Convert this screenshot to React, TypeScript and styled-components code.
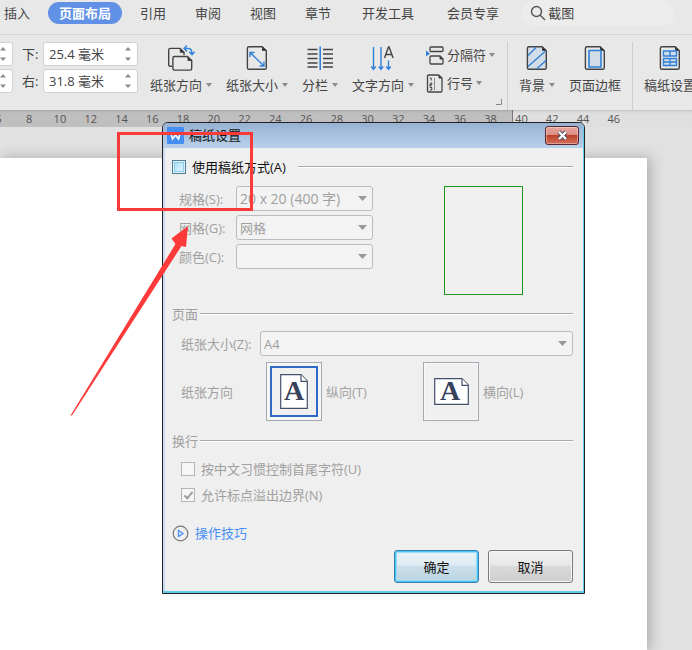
import React from "react";
import styled, { createGlobalStyle } from "styled-components";

const GlobalStyle = createGlobalStyle`
  *, *::before, *::after { box-sizing: border-box; }
  body { margin: 0; overflow: hidden; }
  body, button, input, select {
    font-family: "Open Sans", "Noto Sans CJK SC", sans-serif;
    font-size: 13px;
    line-height: 18px;
  }
  button { border: 0; padding: 0; background: none; color: inherit; }
`;

const Screen = styled.div`
  position: relative;
  min-height: 100vh;
  display: flex;
  flex-direction: column;
  overflow: hidden;
  background: #e1e1e1;
  color: #444;
`;

/* Tab strip */
const TabBar = styled.header`
  display: flex;
  align-items: center;
  height: 35px;
  padding-bottom: 8px;
  background: #e8e8e8;
  border-bottom: 1px solid #d6d6d6;
`;

const Tabs = styled.nav`
  display: flex;
  flex: none;
  gap: 1px;
  margin-left: -10px;
`;

const Tab = styled.button<{ $wide?: boolean; $active?: boolean }>`
  height: 22px;
  white-space: nowrap;
  padding: 0 ${(p) => (p.$active ? 11 : p.$wide ? 16 : 14)}px;
  margin: 0 ${(p) => (p.$active ? 3 : 0)}px;
  border-radius: 11px;
  background: ${(p) => (p.$active ? "#6191e6" : "transparent")};
  color: ${(p) => (p.$active ? "#fff" : "#444")};
  font-weight: ${(p) => (p.$active ? 600 : 400)};
`;

const Search = styled.label`
  display: flex;
  align-items: center;
  gap: 2px;
  flex: 0 0 153px;
  height: 26px;
  margin-left: 7px;
  padding-left: 8px;
  border-radius: 13px;
  background: #ececec;
`;

const SearchInput = styled.input`
  width: 100px;
  min-width: 0;
  padding: 0;
  border: 0;
  outline: 0;
  background: transparent;
  color: #444;
`;

/* Ribbon */
const Ribbon = styled.div`
  display: flex;
  align-items: flex-start;
  height: 75px;
  flex: none;
  padding-top: 7px;
  background: #e8e8e8;
  white-space: nowrap;
`;

const Margins = styled.div`
  display: grid;
  grid-template-columns: 95px 30px 95px;
  row-gap: 3px;
  align-items: center;
  flex: none;
  margin-left: -82px;
  margin-right: 12px;
`;

const MarginLabel = styled.label`
  padding-left: 9px;
`;

const Spinner = styled.div`
  display: flex;
  align-items: center;
  height: 24px;
  padding: 0 6px 0 5px;
  border: 1px solid #d0d0d0;
  border-radius: 3px;
  background: #fff;
`;

const SpinnerInput = styled.input`
  flex: 1;
  min-width: 0;
  padding: 0;
  border: 0;
  outline: 0;
  color: #444;
  background: transparent;
`;

const Tools = styled.div<{ $pad?: number }>`
  display: flex;
  flex: none;
  gap: 14px;
  padding: 0 ${(p) => p.$pad ?? 0}px;
`;

const Tool = styled.button`
  display: flex;
  flex-direction: column;
  align-items: center;
  gap: 4px;
  padding-top: 3px;
`;

const ToolText = styled.span`
  display: flex;
  align-items: center;
  gap: 4px;
`;

const SmallTools = styled.div`
  display: flex;
  flex-direction: column;
  align-items: flex-start;
  gap: 8px;
  flex: none;
  width: 70px;
  margin-left: 12px;
  padding-top: 3px;
`;

const SmallTool = styled.button`
  display: flex;
  align-items: center;
  gap: 3px;
  height: 20px;
`;

const Launcher = styled.button`
  display: flex;
  align-self: flex-end;
  padding: 0 5px 5px 0;
`;

const Separator = styled.div`
  flex: none;
  width: 1px;
  height: 68px;
  background: #cfcfcf;
`;

/* Ruler and document */
const Ruler = styled.div`
  display: flex;
  flex: none;
  height: 17px;
  padding-right: 63px;
  background: linear-gradient(to right, #bfbfbf 74%, #777 74%, #777 calc(74% + 1px), #dfdfdf calc(74% + 1px));
  box-shadow: inset 0 3px 3px -2px rgba(0, 0, 0, 0.15);
`;

const Ticks = styled.div`
  display: flex;
  flex: 1;
  margin-left: -17px;
`;

const Tick = styled.span`
  flex: 1;
  text-align: center;
  font-size: 11px;
  line-height: 17px;
  color: #555;
`;

const Workspace = styled.main`
  display: flex;
  flex: 1;
  padding: 31px 45px 0 0;
`;

const Paper = styled.div`
  flex: 1;
  background: #fff;
  box-shadow: 3px 0 12px 1px rgba(0, 0, 0, 0.22);
`;

/* Dialog */
const Dialog = styled.section`
  position: absolute;
  left: 162px;
  right: 107px;
  top: 122px;
  border: 1px solid #222;
  border-radius: 6px 6px 0 0;
  background: #efefef;
  color: #a0a0a0;
  overflow: hidden;
`;

const Frame = styled.div`
  border: solid #5fcbe6;
  border-width: 0 1px 2px 0;
`;

const TitleBar = styled.div`
  display: flex;
  align-items: center;
  gap: 5px;
  height: 25px;
  padding: 0 4px 1px 4px;
  background: linear-gradient(#97b2d2, #b9d1ea);
`;

const Title = styled.h1`
  flex: 1;
  margin: 0;
  font-size: 13px;
  font-weight: 400;
  line-height: 18px;
  color: #111;
`;

const Close = styled.button`
  display: flex;
  align-items: center;
  justify-content: center;
  width: 34px;
  height: 19px;
  border: 1px solid #5a2431;
  border-radius: 3px;
  background: linear-gradient(#e6a79f, #dd8c80 48%, #bd4229 50%, #d3705c);
  box-shadow: inset 0 0 0 1px rgba(255, 255, 255, 0.35);
`;

const Body = styled.form`
  padding: 7px 10px 8px 7px;
  border-left: 2px solid #c9dbee;
`;

const CheckRow = styled.label<{ $dark?: boolean }>`
  display: flex;
  align-items: center;
  gap: 6px;
  height: ${(p) => (p.$dark ? 24 : 18)}px;
  color: ${(p) => (p.$dark ? "#111" : "#a0a0a0")};
`;

const CheckBox = styled.input`
  appearance: none;
  display: grid;
  place-content: center;
  width: 14px;
  height: 14px;
  margin: 0;
  border: 1px solid #4f8098;
  background: linear-gradient(135deg, #a5dcf8, #e8f8ff);
  box-shadow: inset 0 0 0 1px #def2fb, inset 0 0 0 2px #8fcdec;
  &:disabled {
    border-color: #b4b4b4;
    background: #f6f6f6;
    box-shadow: none;
  }
  &:checked::after {
    content: "";
    width: 5px;
    height: 9px;
    margin-bottom: 2px;
    border: solid #a0a0a0;
    border-width: 0 2px 2px 0;
    transform: rotate(40deg);
  }
`;

const Enable = styled.div`
  display: flex;
  align-items: center;
  gap: 12px;
`;

const Rule = styled.span`
  flex: 1;
  height: 2px;
  background: #a8a8a8;
  border-bottom: 1px solid #fff;
`;

const Heading = styled.h2`
  display: flex;
  align-items: center;
  gap: 2px;
  height: 20px;
  margin: 9px 0 7px;
  font-size: 13px;
  font-weight: 400;
`;

const Grid = styled.div`
  display: flex;
  justify-content: space-between;
  margin-top: 7px;
  padding: 0 50px 0 7px;
`;

const Fields = styled.div`
  display: grid;
  grid-template-columns: 57px 137px;
  row-gap: 4px;
  align-content: start;
`;

const Preview = styled.div`
  width: 79px;
  height: 109px;
  border: 1px solid #1f941f;
`;

const Label = styled.label`
  align-self: center;
`;

const SelectBox = styled.div`
  display: grid;
  align-items: center;
  flex: 1;
  > * { grid-area: 1 / 1; }
  > svg { justify-self: end; margin-right: 6px; }
`;

const Select = styled.select<{ $large?: boolean }>`
  appearance: none;
  width: 100%;
  height: 25px;
  padding: 0 3px;
  border: 1px solid #b8bcc0;
  border-radius: 3px;
  background: #f3f3f3;
  color: #a0a0a0;
  font-size: ${(p) => (p.$large ? 14 : 13)}px;
  opacity: 1;
`;

const PaperRow = styled.div`
  display: flex;
  padding-left: 9px;
  > label { flex: 0 0 79px; }
`;

const Directions = styled.fieldset`
  display: grid;
  grid-template-columns: 85px 157px 1fr;
  align-items: center;
  margin: 6px 0 10px;
  padding: 0 0 0 9px;
  border: 0;
`;

const Direction = styled.label`
  display: flex;
  align-items: center;
  gap: 4px;
`;

const Radio = styled.input`
  appearance: none;
  width: 0;
  height: 0;
  margin: 0 -4px 0 0;
`;

const DirectionTile = styled.span<{ $on?: boolean }>`
  display: flex;
  align-items: center;
  justify-content: center;
  width: 56px;
  height: 59px;
  border: 1px solid #a4a8b0;
  background: #f0f0f0;
  box-shadow: ${(p) =>
    p.$on
      ? "inset 0 0 0 3px #f5f5f5, inset 0 0 0 5px #2f69c8"
      : "inset 0 0 0 1px #f8f8f8"};
`;

const SheetDrawing = styled.svg`
  overflow: visible;
`;

const Checks = styled.div`
  display: grid;
  gap: 8px;
  padding: 2px 0 0 9px;
`;

const Tips = styled.a`
  display: flex;
  align-items: center;
  gap: 6px;
  width: max-content;
  height: 20px;
  margin: 19px 0 7px;
  color: #4a90f5;
  text-decoration: none;
`;

const Actions = styled.div`
  display: flex;
  justify-content: flex-end;
  gap: 9px;
`;

const Action = styled.button<{ $primary?: boolean }>`
  width: 85px;
  height: 33px;
  border: 1px solid ${(p) => (p.$primary ? "#3c7fb1" : "#7a7a7a")};
  border-radius: 3px;
  color: #111;
  background: ${(p) =>
    p.$primary
      ? "linear-gradient(#eaf3f9, #dfebf3 46%, #cde0eb 48%, #b9d5e3)"
      : "linear-gradient(#f2f2f2, #e8e8e8 46%, #dadada 48%, #cdcdcd)"};
  box-shadow: ${(p) =>
    p.$primary ? "inset 0 0 0 1px #49c3ef, inset 0 0 1px 2px #8ddcf5" : "inset 0 0 0 1px #f6f6f6"};
`;

/* Annotations over the page */
const RedBox = styled.div`
  position: absolute;
  left: 117px;
  top: 132px;
  width: 136px;
  height: 79px;
  border: 3px solid #fd3a3a;
  pointer-events: none;
`;

const RedArrow = styled.svg`
  position: absolute;
  left: 68px;
  top: 224px;
  pointer-events: none;
`;

const Caret = () => (
  <svg width="6" height="4" viewBox="0 0 6 4"><path d="M0 0h6L3 4z" fill="#8b8b8b" /></svg>
);

const Arrows = () => (
  <svg width="6" height="16" viewBox="0 0 6 16"><path d="M0 4.500h6L3 1zM0 11.500h6L3 15z" fill="#8b8b8b" /></svg>
);

const ToolIcon = ({ children }: { children: React.ReactNode }) => (
  <svg width="28" height="27" viewBox="0 0 28 27" fill="none" stroke="#444" strokeWidth="1.4">{children}</svg>
);

const Sheet = ({ fill = "none" }: { fill?: string }) => (
  <>
    <path d="M6 1.700h13l4.300 4v17q0 1.600-1.600 1.600H6q-1.600 0-1.600-1.600V3.300Q4.400 1.700 6 1.700z" fill={fill} />
    <path d="M19.500 1.700v3.800h3.800z" fill="#333" strokeWidth="1" />
  </>
);

const DirectionIcon = () => (
  <ToolIcon>
    <path d="M5 21.300H3.300Q1.700 21.300 1.700 20V5q0-1.600 1.600-1.600H13l4 4V10" />
    <path d="M13.300 3.500v3.800h3.700z" fill="#333" strokeWidth="1" />
    <path d="M7.500 11.500h12.700l4.500 4v8q0 1.600-1.600 1.600H7.500q-1.600 0-1.600-1.600V13q0-1.500 1.600-1.500z" fill="#e8e8e8" />
    <path d="M21 11.700v3.800h3.700z" fill="#333" strokeWidth="1" />
    <path d="M18 3.500h3.500Q25 3.500 25 9M20 .500l-3 3 3 3M22.200 6.800 25 9.800l2.600-3" stroke="#2f80d8" />
  </ToolIcon>
);

const SizeIcon = () => (
  <ToolIcon>
    <Sheet />
    <path d="M7 7.500 21 21M7 12V7.500h4.500M21 16.500V21h-4.500" stroke="#2f80d8" />
  </ToolIcon>
);

const ColumnsIcon = () => (
  <ToolIcon>
    <path d="M1.500 4.500h10M1.500 9h10M1.500 13.500h10M1.500 18h10M1.500 22h10M17 4.500h10M17 9h10M17 13.500h10M17 18h10M17 22h10" />
    <path d="M14.200 1.500v23.500" stroke="#2f80d8" strokeWidth="1.600" />
  </ToolIcon>
);

const TextDirectionIcon = () => (
  <ToolIcon>
    <path d="M4.500 2v22M2.300 21.500l2.200 2.800 2.200-2.800M12 2v22M9.800 21.500l2.200 2.800 2.200-2.800M19.500 15.500v8.500M17.300 21.500l2.200 2.800 2.200-2.800" stroke="#2f80d8" />
    <path d="m15.500 13 4-11h.6l4 11M16.700 9.500h6" />
  </ToolIcon>
);

const BackgroundIcon = () => (
  <ToolIcon>
    <Sheet fill="#d3dde7" />
    <path d="m5 10.500 8-8M5 21.500 22 6.500M14 23.500l9-8" stroke="#2f80d8" />
  </ToolIcon>
);

const BorderIcon = () => (
  <ToolIcon>
    <Sheet />
    <path d="M8 5.500h12v16.500H8z" stroke="#2f80d8" strokeWidth="1.600" fill="#d3dde7" />
  </ToolIcon>
);

const ManuscriptIcon = () => (
  <ToolIcon>
    <Sheet />
    <path d="M7.500 6h13v5h-13zM7.500 13.500h13v7h-13zM14 6v5M14 13.500v7M7.500 17h13" stroke="#2f80d8" fill="#d3dde7" />
  </ToolIcon>
);

const BreakIcon = () => (
  <svg width="18" height="19" viewBox="0 0 18 19" fill="none" stroke="#444" strokeWidth="1.300">
    <rect x="4" y="1" width="13" height="4.500" rx="1" />
    <path d="M5 10h9l3 3v4q0 1-1 1H5q-1 0-1-1v-6q0-1 1-1z" />
    <path d="M14 10v3h3z" fill="#333" strokeWidth="1" />
    <path d="M0 4.500v6l4-3z" fill="#2f80d8" stroke="none" />
  </svg>
);

const LineNumberIcon = () => (
  <svg width="18" height="19" viewBox="0 0 18 19" fill="none" stroke="#444" strokeWidth="1.300">
    <path d="M2.500 1h10l3.500 3v13q0 1-1 1H2.500q-1 0-1-1V2q0-1 1-1z" />
    <path d="M13 1v3h3z" fill="#333" strokeWidth="1" />
    <path d="M3.800 4h1.400v2.500M3.800 9h2v1.500h-2V12h2M3.800 13.500h2V16h-2" strokeWidth="1" />
    <path d="M8.500 4v12" stroke="#888" strokeWidth="1" />
  </svg>
);

const LetterSheet = ({ landscape }: { landscape?: boolean }) => {
  const w = landscape ? 35 : 28;
  const h = landscape ? 27 : 35;
  return (
    <SheetDrawing width={w} height={h} viewBox={`0 0 ${w} ${h}`}>
      <path d={`M.7.7H${w - 7}L${w - 0.7} 7V${h - 0.7}H.7z`} fill="#fff" stroke="#46506a" strokeWidth="1.200" />
      <path d={`M${w - 7} .7V7.300H${w - 0.7}`} fill="#fff" stroke="#46506a" strokeWidth="1.200" />
      <text x={landscape ? 16 : 14} y={landscape ? 22 : 26} textAnchor="middle" fontFamily="Liberation Serif, serif" fontWeight="700" fontSize="28" fill="#36425c">A</text>
    </SheetDrawing>
  );
};

const SpinField = ({ id, value, label }: { id: string; value: string; label?: string }) => (
  <Spinner>
    <SpinnerInput id={id} defaultValue={value} aria-label={label} />
    <Arrows />
  </Spinner>
);

const BigTool = ({ icon, text, menu }: { icon: React.ReactNode; text: string; menu?: boolean }) => (
  <Tool type="button">
    {icon}
    <ToolText>{text}{menu && <Caret />}</ToolText>
  </Tool>
);

const DropDown = ({ id, value, large }: { id: string; value: string; large?: boolean }) => (
  <SelectBox>
    <Select id={id} disabled defaultValue={value} $large={large}><option>{value}</option></Select>
    <svg width="9" height="5" viewBox="0 0 9 5"><path d="M0 0h9L4.500 5z" fill="#999" /></svg>
  </SelectBox>
);

const tabs = [
  { text: "插入" }, { text: "页面布局", active: true }, { text: "引用" }, { text: "审阅" },
  { text: "视图" }, { text: "章节" }, { text: "开发工具", wide: true }, { text: "会员专享", wide: true },
];

const ticks = Array.from({ length: 21 }, (_, i) => 6 + i * 2);

export default function App() {
  return (
    <Screen>
      <GlobalStyle />
      <TabBar>
        <Tabs>
          {tabs.map((t) => (
            <Tab key={t.text} type="button" $active={t.active} $wide={t.wide}>{t.text}</Tab>
          ))}
        </Tabs>
        <Search>
          <svg width="16" height="16" viewBox="0 0 16 16" fill="none" stroke="#555" strokeWidth="1.400">
            <circle cx="6.500" cy="6.500" r="5" /><path d="m10.300 10.300 4.700 4.700" />
          </svg>
          <SearchInput defaultValue="截图" aria-label="搜索" />
        </Search>
      </TabBar>

      <Ribbon>
        <Margins>
          <SpinField id="top" value="" label="上" />
          <MarginLabel htmlFor="bottom">下:</MarginLabel>
          <SpinField id="bottom" value="25.4 毫米" />
          <SpinField id="left" value="" label="左" />
          <MarginLabel htmlFor="right">右:</MarginLabel>
          <SpinField id="right" value="31.8 毫米" />
        </Margins>
        <Tools>
          <BigTool icon={<DirectionIcon />} text="纸张方向" menu />
          <BigTool icon={<SizeIcon />} text="纸张大小" menu />
          <BigTool icon={<ColumnsIcon />} text="分栏" menu />
          <BigTool icon={<TextDirectionIcon />} text="文字方向" menu />
        </Tools>
        <SmallTools>
          <SmallTool type="button"><BreakIcon />分隔符<Caret /></SmallTool>
          <SmallTool type="button"><LineNumberIcon />行号<Caret /></SmallTool>
        </SmallTools>
        <Launcher type="button" aria-label="页面设置">
          <svg width="6" height="6" viewBox="0 0 6 6"><path d="M5.500 0v5.500H0" fill="none" stroke="#888" /></svg>
        </Launcher>
        <Separator />
        <Tools $pad={11}>
          <BigTool icon={<BackgroundIcon />} text="背景" menu />
          <BigTool icon={<BorderIcon />} text="页面边框" />
        </Tools>
        <Separator />
        <Tools $pad={11}>
          <BigTool icon={<ManuscriptIcon />} text="稿纸设置" />
        </Tools>
      </Ribbon>

      <Ruler><Ticks>{ticks.map((n) => <Tick key={n}>{n}</Tick>)}</Ticks></Ruler>
      <Workspace><Paper /></Workspace>

      <Dialog role="dialog" aria-labelledby="dialog-title">
        <Frame>
          <TitleBar>
            <svg width="17" height="17" viewBox="0 0 17 17">
              <rect width="17" height="17" rx="1" fill="#468df2" />
              <path d="m3.500 5 2 7 3-4 3 4 2-7" fill="none" stroke="#fff" strokeWidth="1.600" />
            </svg>
            <Title id="dialog-title">稿纸设置</Title>
            <Close type="button" aria-label="关闭">
              <svg width="13" height="11" viewBox="0 0 13 11">
                <path d="m3 2 7 7M10 2 3 9" stroke="#4d4d5c" strokeWidth="4.200" />
                <path d="m3 2 7 7M10 2 3 9" stroke="#fff" strokeWidth="2.400" />
              </svg>
            </Close>
          </TitleBar>
          <Body>
            <Enable>
              <CheckRow $dark><CheckBox type="checkbox" />使用稿纸方式(A)</CheckRow>
              <Rule />
            </Enable>
            <Grid>
              <Fields>
                <Label htmlFor="spec">规格(S):</Label>
                <DropDown id="spec" value="20 x 20 (400 字)" large />
                <Label htmlFor="grid">网格(G):</Label>
                <DropDown id="grid" value="网格" />
                <Label htmlFor="color">颜色(C):</Label>
                <DropDown id="color" value="" />
              </Fields>
              <Preview />
            </Grid>
            <Heading>页面<Rule /></Heading>
            <PaperRow>
              <Label htmlFor="size">纸张大小(Z):</Label>
              <DropDown id="size" value="A4" />
            </PaperRow>
            <Directions disabled aria-label="纸张方向">
              <span>纸张方向</span>
              <Direction>
                <Radio type="radio" name="direction" defaultChecked />
                <DirectionTile $on><LetterSheet /></DirectionTile>纵向(T)
              </Direction>
              <Direction>
                <Radio type="radio" name="direction" />
                <DirectionTile><LetterSheet landscape /></DirectionTile>横向(L)
              </Direction>
            </Directions>
            <Heading>换行<Rule /></Heading>
            <Checks>
              <CheckRow><CheckBox type="checkbox" disabled />按中文习惯控制首尾字符(U)</CheckRow>
              <CheckRow><CheckBox type="checkbox" disabled defaultChecked />允许标点溢出边界(N)</CheckRow>
            </Checks>
            <Tips href="#tips">
              <svg width="17" height="17" viewBox="0 0 17 17" fill="none">
                <circle cx="8.500" cy="8.500" r="7.300" stroke="#777" strokeWidth="1.200" />
                <path d="M6.500 5.500v6l4.500-3z" stroke="#4a90f5" strokeWidth="1.300" />
              </svg>
              操作技巧
            </Tips>
            <Actions>
              <Action type="button" $primary>确定</Action>
              <Action type="button">取消</Action>
            </Actions>
          </Body>
        </Frame>
      </Dialog>

      <RedBox />
      <RedArrow width="124" height="194" viewBox="0 0 124 194">
        <path d="M2.500 191.500 107.500 20l-4-5.500L120 2l-2 21-4.500-1L4 191.500z" fill="#fd3a3a" />
      </RedArrow>
    </Screen>
  );
}
